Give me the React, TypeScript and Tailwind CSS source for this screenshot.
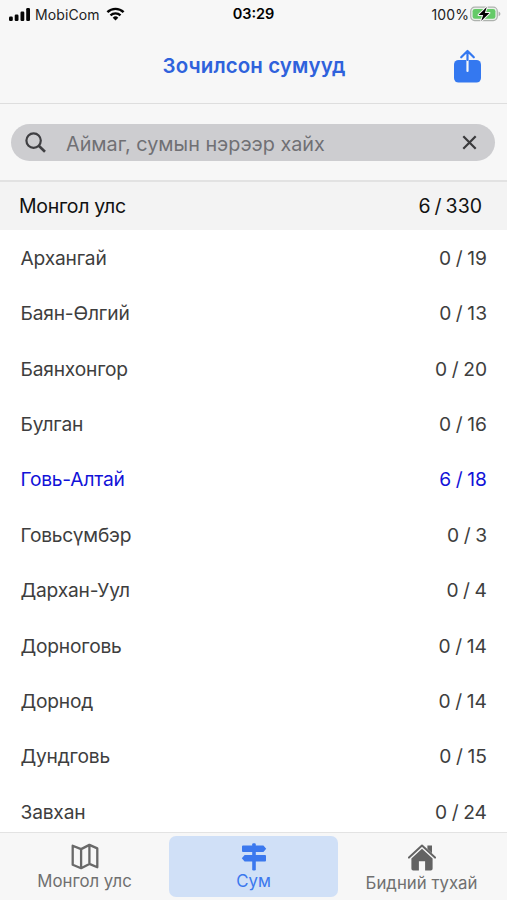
import React, { FunctionComponent } from "react"

interface Province {
  name: string
  visited: number
  total: number
}

const provinces: Province[] = [
  { name: "Архангай", visited: 0, total: 19 },
  { name: "Баян-Өлгий", visited: 0, total: 13 },
  { name: "Баянхонгор", visited: 0, total: 20 },
  { name: "Булган", visited: 0, total: 16 },
  { name: "Говь-Алтай", visited: 6, total: 18 },
  { name: "Говьсүмбэр", visited: 0, total: 3 },
  { name: "Дархан-Уул", visited: 0, total: 4 },
  { name: "Дорноговь", visited: 0, total: 14 },
  { name: "Дорнод", visited: 0, total: 14 },
  { name: "Дундговь", visited: 0, total: 15 },
  { name: "Завхан", visited: 0, total: 24 },
]

const StatusBar: FunctionComponent = () => (
  <div className="grid h-7 grid-cols-3 items-center pl-[9px] pr-[6px] text-[14px] text-[#222]">
    <div className="flex items-center">
      <svg className="h-[13px] w-[21px]" viewBox="0 0 21 13" fill="#050505">
        <rect x="0" y="8.5" width="3.8" height="4.5" rx="1.2" />
        <rect x="5.7" y="6.5" width="3.8" height="6.5" rx="1.2" />
        <rect x="11.5" y="3.5" width="3.8" height="9.5" rx="1.2" />
        <rect x="17.2" y="0" width="3.8" height="13" rx="1.2" />
      </svg>
      <span className="ml-[5px] tracking-[0.1px]">MobiCom</span>
      <svg className="ml-[6px] h-[14px] w-[19px]" viewBox="0 0 18 14" fill="none" stroke="#050505">
        <path d="M.9 5.2a11.6 11.6 0 0 1 16.2 0" strokeWidth="2.4" />
        <path d="M4 8.4a7.2 7.2 0 0 1 10 0" strokeWidth="2.3" />
        <path d="M9 13.6 6.2 10.7a4 4 0 0 1 5.6 0z" fill="#050505" stroke="none" />
      </svg>
    </div>
    <div className="pr-[3px] text-center text-[14.5px] font-semibold text-black">03:29</div>
    <div className="flex items-center justify-end">
      <span className="tracking-[0.1px]">100%</span>
      <svg className="ml-px h-[16px] w-[31px]" viewBox="0 0 31 16">
        <rect x=".7" y="1.2" width="26.6" height="13.4" rx="4" fill="#e9f0e9" stroke="#aeb2ae" strokeWidth="1.2" />
        <rect x="2.6" y="3" width="22.8" height="9.8" rx="2.3" fill="#65ca68" />
        <path d="M28.6 5.5c2.4 1 2.4 3.8 0 4.8z" fill="#aeb2ae" />
        <path
          d="M16.8 1 8.6 9h4.6l-2 6L19.4 7h-4.6z"
          fill="#000"
          stroke="#f7f7f7"
          strokeWidth="2"
          strokeLinejoin="round"
          paintOrder="stroke"
        />
      </svg>
    </div>
  </div>
)

const Header: FunctionComponent = () => (
  <header className="grid h-[76px] grid-cols-[1fr_auto_1fr] items-center border-b border-[#dedede]">
    <h1 className="col-start-2 pl-px pt-px text-[20.5px] font-semibold tracking-[0.1px] text-[#2f62dc]">
      Зочилсон сумууд
    </h1>
    <button className="mr-[26px] justify-self-end">
      <svg className="h-[34px] w-[27px]" viewBox="0 0 27 34" fill="none">
        <rect y="11" width="27" height="22.5" rx="4.5" fill="#3478f0" />
        <path d="M13.5 11v11" stroke="#f7f7f7" strokeWidth="2.2" strokeLinecap="round" />
        <path
          d="M13.5 11V2.5M7.2 8.3l6.3-6.3 6.3 6.3"
          stroke="#3478f0"
          strokeWidth="2.2"
          strokeLinecap="round"
          strokeLinejoin="round"
        />
      </svg>
    </button>
  </header>
)

const SearchBar: FunctionComponent = () => (
  <div className="h-[78px] border-b-2 border-[#e2e2e2] pl-[11px] pr-3 pt-5">
    <div className="flex h-[37px] items-center rounded-full bg-[#cdcdd0] pl-[14px] pr-[18px]">
      <svg className="h-[21px] w-[21px]" viewBox="0 0 21 21" fill="none" stroke="#3f3f42" strokeWidth="2.2">
        <circle cx="8.6" cy="8.6" r="7.2" />
        <path d="m13.8 13.8 6.2 6" strokeWidth="2.6" />
      </svg>
      <span className="ml-5 grow pt-[5px] text-[19.8px] text-[#707074]">Аймаг, сумын нэрээр хайх</span>
      <svg className="h-[15px] w-[15px]" viewBox="0 0 15 15" stroke="#3a3a3c" strokeWidth="2.2">
        <path d="m1.3 1.3 12.4 12.4M13.7 1.3 1.3 13.7" />
      </svg>
    </div>
  </div>
)

const MapIcon: FunctionComponent = () => (
  <svg className="h-[27px] w-[28px]" viewBox="0 0 28 27" fill="none" stroke="#696969" strokeWidth="2.3" strokeLinejoin="round">
    <path d="m1.7 2.7 8.4 3.4 8.3-4.2 7.9 3.5v18.9l-7.9-3.4-8.3 4.3-8.4-3.5zM10.1 6.1v19.1M18.4 1.9v19" />
  </svg>
)

const SignsIcon: FunctionComponent = () => (
  <svg className="h-[28px] w-[26px]" viewBox="0 0 26 28" fill="currentColor">
    <rect x="11.2" y="0.3" width="3.6" height="27.2" rx="1.2" />
    <path d="M2 2.5h20.4l2.8 3.2L22.4 9H2a1 1 0 0 1-1-1V3.5a1 1 0 0 1 1-1z" />
    <path d="M24 12H3.6L.8 15.2l2.8 3.3H24a1 1 0 0 0 1-1V13a1 1 0 0 0-1-1z" />
  </svg>
)

const HomeIcon: FunctionComponent = () => (
  <svg className="h-[27px] w-[28px]" viewBox="0 0 28 27" fill="#636363">
    <path d="M19.4 1.6h4.6v7.6l-4.6-4.3z" />
    <path d="M1 13.6 14 1.6l13 12" fill="none" stroke="#636363" strokeWidth="2" strokeLinejoin="round" strokeLinecap="round" />
    <path d="m14 4.8 10.6 9.8v9.9c0 1.2-.7 1.9-1.9 1.9h-5.6v-9.1h-6.2v9.1H5.3c-1.2 0-1.9-.7-1.9-1.9v-9.9z" />
  </svg>
)

const TabBar: FunctionComponent = () => (
  <nav className="grid h-[68px] shrink-0 grid-cols-3 border-t border-[#e3e3e3] bg-[#f7f7f7] text-[16.8px] text-[#707070]">
    <div className="flex flex-col items-center pt-[10px]">
      <MapIcon />
      <span className="leading-[22px]">Монгол улс</span>
    </div>
    <div className="my-[3px] flex flex-col items-center rounded-[7px] bg-[#d0e0f7] pt-[7px] text-[#3b78ee]">
      <SignsIcon />
      <span className="leading-[20px]">Сум</span>
    </div>
    <div className="flex flex-col items-center pr-0.5 pt-[11px]">
      <HomeIcon />
      <span className="leading-[25px]">Бидний тухай</span>
    </div>
  </nav>
)

const App: FunctionComponent = () => (
  <div className="flex h-[900px] w-[507px] flex-col overflow-hidden bg-white font-['Inter',sans-serif]">
    <div className="shrink-0 bg-[#f7f7f7]">
      <StatusBar />
      <Header />
      <SearchBar />
    </div>
    <div className="flex h-12 shrink-0 items-center justify-between bg-[#f3f3f3] pl-[19px] pr-[25px] pt-0.5 text-[19.5px] text-[#111]">
      <span className="tracking-[-0.3px]">Монгол улс</span>
      <span className="[word-spacing:-1.5px]">6 / 330</span>
    </div>
    <ul className="min-h-0 grow overflow-hidden text-[19.2px] text-[#3e3e3e]">
      {provinces.map(({ name, visited, total }) => (
        <li
          key={name}
          className={`flex h-[55.4px] items-center justify-between pl-[20.5px] pr-5 pt-px ${visited > 0 ? "text-[#1212d8]" : ""}`}
        >
          <span className="tracking-[-0.2px]">{name}</span>
          <span className="[word-spacing:-0.8px]">
            {visited} / {total}
          </span>
        </li>
      ))}
    </ul>
    <TabBar />
  </div>
)

export default App
